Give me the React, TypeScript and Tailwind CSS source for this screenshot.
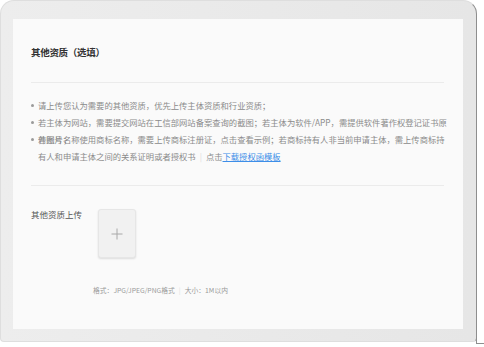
import React from 'react';

const Dot: React.FC = () => (
    <div className="w-[7px] shrink-0 flex pt-[7px]">
        <span className="w-[3px] h-[3px] rounded-full bg-[#9a9a9a]" />
    </div>
);

const App: React.FC = () => {
    return (
        <div className="relative w-[484px] h-[347px] overflow-hidden bg-white font-['Noto_Sans_CJK_SC','Noto_Sans',sans-serif]">
            <div className="w-[477px] h-[342px] rounded-t-[14px] rounded-b-[4px] border border-[#dedede] border-r-[#8e8e8e] bg-gradient-to-r from-[#ededed] to-[#e6e6e6] pl-[12px] pt-[18px]">
                <div className="w-[450px] h-[310px] bg-[#fafafa] pl-[18px] pr-[19px] pt-[26px]">
                    <h2 className="text-[9.5px] leading-[14px] font-bold tracking-[-0.3px] text-[#333]">其他资质（选填）</h2>
                    <div className="mt-[23px] h-px bg-[#ebebeb]" />

                    <div className="mt-[14px] text-[8.3px] leading-[17px] text-[#8a8a8a] whitespace-nowrap">
                        <div className="flex">
                            <Dot />
                            <div>请上传您认为需要的其他资质，优先上传主体资质和行业资质；</div>
                        </div>
                        <div className="flex h-[17px]">
                            <Dot />
                            <div>
                                若主体为网站，需要提交网站在工信部网站备案查询的截图；若主体为软件/APP，需提供软件著作权登记证书原
                                <br />
                                件图片；
                            </div>
                        </div>
                        <div className="flex">
                            <Dot />
                            <div>
                                若账号名称使用商标名称，需要上传商标注册证，点击查看示例；若商标持有人非当前申请主体，需上传商标持
                                <br />
                                有人和申请主体之间的关系证明或者授权书
                                <span className="mx-[4px] text-[#dcdcdc]">|</span>
                                点击<a className="text-[#3d8ee8] underline">下载授权函模板</a>
                            </div>
                        </div>
                    </div>

                    <div className="mt-[20px] h-px bg-[#ebebeb]" />

                    <div className="mt-[23px] flex items-start">
                        <div className="w-[67px] -mt-[1px] text-[8.5px] leading-[12px] text-[#555]">其他资质上传</div>
                        <button className="w-[38px] h-[49px] rounded-[3px] border border-[#e6e6e6] bg-[#f1f1f1] shadow-[0_1px_2px_rgba(0,0,0,0.12)] flex items-center justify-center">
                            <svg width="12" height="12" viewBox="0 0 12 12">
                                <path d="M6 0.5V11.5M0.5 6H11.5" stroke="#a8a8a8" strokeWidth="1" />
                            </svg>
                        </button>
                    </div>

                    <div className="mt-[27px] ml-[62px] text-[6.8px] leading-[10px] text-[#9a9a9a] whitespace-nowrap">
                        格式：JPG/JPEG/PNG格式
                        <span className="mx-[4px] text-[#dddddd]">|</span>
                        大小：1M以内
                    </div>
                </div>
            </div>
            <div className="absolute left-[476px] top-[336px] w-[8px] h-[8px] border-l border-b border-[#8e8e8e]" />
        </div>
    );
};

export default App;
